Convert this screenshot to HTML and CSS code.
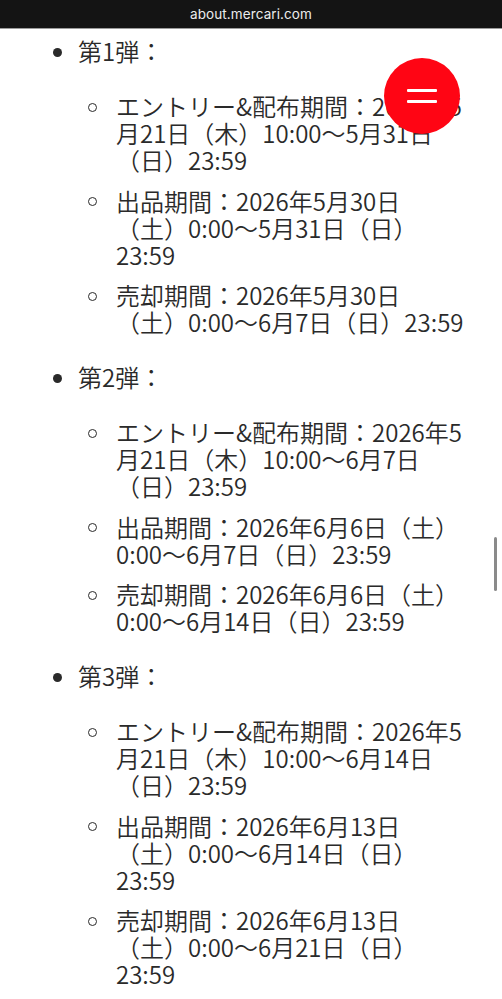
FILE: index.html
```html
<!DOCTYPE html>
<html lang="ja">
<head>
<meta charset="utf-8">
<meta name="viewport" content="width=device-width, initial-scale=1">
<title>about.mercari.com</title>
<link rel="stylesheet" href="styles.css">
</head>
<body>
<header class="urlbar"><span class="urlbar-text">about.mercari.com</span></header>
<main class="content">
  <ul class="rounds">
    <li class="round">
      <p class="round-title">第1弾：</p>
      <ul class="periods">
        <li>エントリー&amp;配布期間：2026年5月21日（木）10:00〜5月31日（日）23:59</li>
        <li>出品期間：2026年5月30日（土）0:00〜5月31日（日）23:59</li>
        <li>売却期間：2026年5月30日（土）0:00〜6月7日（日）23:59</li>
      </ul>
    </li>
    <li class="round">
      <p class="round-title">第2弾：</p>
      <ul class="periods">
        <li>エントリー&amp;配布期間：2026年5月21日（木）10:00〜6月7日（日）23:59</li>
        <li>出品期間：2026年6月6日（土）0:00〜6月7日（日）23:59</li>
        <li>売却期間：2026年6月6日（土）0:00〜6月14日（日）23:59</li>
      </ul>
    </li>
    <li class="round">
      <p class="round-title">第3弾：</p>
      <ul class="periods">
        <li>エントリー&amp;配布期間：2026年5月21日（木）10:00〜6月14日（日）23:59</li>
        <li>出品期間：2026年6月13日（土）0:00〜6月14日（日）23:59</li>
        <li>売却期間：2026年6月13日（土）0:00〜6月21日（日）23:59</li>
      </ul>
    </li>
  </ul>
</main>
<button class="menu-button" type="button" aria-label="メニュー">
  <svg width="30" height="14" viewBox="0 0 30 14" aria-hidden="true">
    <rect x="0" y="0" width="30" height="3" rx="1" fill="#fff"/>
    <rect x="0" y="11" width="30" height="3" rx="1" fill="#fff"/>
  </svg>
</button>
<div class="scroll-indicator"></div>
</body>
</html>
```

FILE: styles.css
```css
html, body {
  margin: 0;
  padding: 0;
  background: #fff;
}

body {
  font-family: "Noto Sans CJK JP", "Noto Sans", sans-serif;
  font-weight: 350;
  color: #2a2a2a;
  font-size: 24px;
  line-height: 27px;
  overflow: hidden;
  text-spacing-trim: space-all;
}

.urlbar {
  height: 28px;
  background: #141414;
  border-bottom: 1px solid #9c9c9c;
  display: flex;
  align-items: center;
  justify-content: center;
}

.urlbar-text {
  font-family: Inter, "Noto Sans", sans-serif;
  font-weight: 400;
  font-size: 13.5px;
  line-height: 16px;
  color: #ececec;
  letter-spacing: 0.1px;
}

.content {
  padding: 0 34px 0 0;
}

.rounds {
  margin: 8px 0 0;
  padding: 0 0 0 78px;
  list-style: disc;
}

.round-title {
  margin: 0;
}

.periods {
  margin: 28px 0 28px;
  padding: 0 0 0 38px;
  list-style: none;
  display: flex;
  flex-direction: column;
  gap: 13.5px;
}

.periods > li::before {
  content: "";
  display: inline-block;
  box-sizing: border-box;
  width: 9px;
  height: 9px;
  margin-left: -28px;
  margin-right: 19px;
  border: 1.8px solid #2a2a2a;
  border-radius: 50%;
  vertical-align: 0.18em;
}

.menu-button {
  position: fixed;
  top: 58px;
  left: 384px;
  width: 76px;
  height: 76px;
  border: 0;
  border-radius: 50%;
  background: #ff0514;
  padding: 0;
  display: flex;
  align-items: center;
  justify-content: center;
}

.scroll-indicator {
  position: fixed;
  top: 537px;
  left: 494px;
  width: 3px;
  height: 54px;
  border-radius: 2px;
  background: #8a8a8a;
}
```
